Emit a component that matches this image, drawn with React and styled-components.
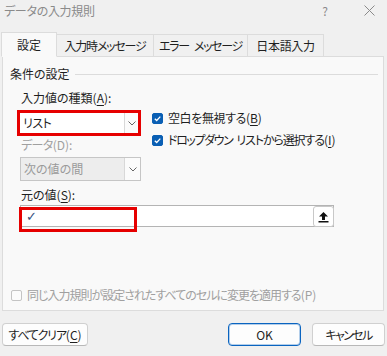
import styled, { createGlobalStyle } from "styled-components";

const GlobalStyle = createGlobalStyle`
  html, body {
    margin: 0;
    padding: 0;
    background: #f0f0f0;
  }
  body {
    font-family: "Noto Sans CJK JP", "Noto Sans", sans-serif;
    font-size: 12px;
    color: #1f1f1f;
    font-feature-settings: "palt";
  }
`;

const Window = styled.div`
  width: 387px;
  height: 356px;
  display: flex;
  flex-direction: column;
  background: #f0f0f0;
  overflow: hidden;
`;

const TitleBar = styled.div`
  height: 21px;
  display: flex;
  align-items: center;
  padding: 0 8px 0 4px;
  color: #8a8a8a;
  font-size: 12px;
  line-height: 14px;
`;

const TitleText = styled.span`
  flex: 1;
  letter-spacing: -0.3px;
`;

const TitleButton = styled.span`
  width: 20px;
  display: flex;
  justify-content: center;
  margin-left: ${(p) => p.$gap || 0}px;
  color: #8a8a8a;
`;

// kana-heavy strings run narrower in the original UI font
const Tight = styled.span`
  letter-spacing: ${(p) => p.$ls ?? -1}px;
`;

const Gap = styled.span`
  display: inline-block;
  width: ${(p) => p.$w}px;
`;

const TabRow = styled.div`
  display: flex;
  align-items: flex-end;
  margin-top: 11px;
  padding-left: 1px;
  height: 25px;
  margin-bottom: -1px;
  position: relative;
  z-index: 1;
`;

const Tab = styled.div`
  width: ${(p) => p.$w}px;
  height: ${(p) => (p.$active ? 25 : 23)}px;
  box-sizing: border-box;
  display: flex;
  align-items: center;
  justify-content: center;
  white-space: nowrap;
  border: 1px solid #dcdcdc;
  border-left-width: ${(p) => (p.$first ? 1 : 0)}px;
  border-bottom-color: ${(p) => (p.$active ? "#f9f9f9" : "#dcdcdc")};
  background: ${(p) => (p.$active ? "#f9f9f9" : "#f0f0f0")};
  line-height: 14px;
  padding-top: ${(p) => (p.$active ? 0 : 1)}px;
`;

const Panel = styled.div`
  margin-left: 2px;
  width: 382px;
  height: 255px;
  box-sizing: border-box;
  border: 1px solid #dcdcdc;
  background: #f9f9f9;
  display: flex;
  flex-direction: column;
`;

const GroupHeader = styled.div`
  display: flex;
  align-items: center;
  margin: 10px 5px 0 7px;
  line-height: 14px;
`;

const GroupLine = styled.div`
  flex: 1;
  height: 1px;
  background: #dcdcdc;
  margin-left: 5px;
`;

const Content = styled.div`
  padding-left: 14px;
  display: flex;
  flex-direction: column;
`;

const FieldLabel = styled.div`
  margin-left: 4px;
  margin-top: ${(p) => p.$mt || 0}px;
  line-height: 14px;
  color: ${(p) => (p.$disabled ? "#a0a0a0" : "#1f1f1f")};
`;

const Under = styled.span`
  text-decoration: underline;
  text-underline-offset: 2px;
`;

const Row = styled.div`
  display: flex;
  align-items: flex-start;
  margin-top: 5px;
`;

const LeftCol = styled.div`
  width: 124px;
  display: flex;
  flex-direction: column;
`;

const Highlight = styled.div`
  border: 3px solid #e60000;
  height: 26px;
  box-sizing: border-box;
  display: flex;
`;

const Combo = styled.div`
  display: flex;
  box-sizing: border-box;
  height: ${(p) => p.$h}px;
  width: ${(p) => p.$w}px;
  margin-left: ${(p) => p.$ml || 0}px;
  margin-top: ${(p) => p.$mt || 0}px;
  background: ${(p) => (p.$disabled ? "#ededed" : "#ffffff")};
  border: ${(p) => (p.$disabled ? "1px solid #c6c6c6" : "none")};
  color: ${(p) => (p.$disabled ? "#9a9a9a" : "#1f1f1f")};
  line-height: 14px;
`;

const ComboText = styled.div`
  flex: 1;
  display: flex;
  align-items: center;
  padding-left: 3px;
`;

const ComboArrow = styled.div`
  width: ${(p) => p.$w}px;
  display: flex;
  align-items: center;
  justify-content: center;
  border-left: 1px solid #d8d8d8;
  background: #fbfbfb;
`;

const RightCol = styled.div`
  margin-left: 11px;
  display: flex;
  flex-direction: column;
  gap: 8px;
  margin-top: 1px;
`;

const CheckRow = styled.label`
  display: flex;
  align-items: center;
  line-height: 14px;
  white-space: nowrap;
  color: ${(p) => (p.$disabled ? "#a0a0a0" : "#1f1f1f")};
`;

const Box = styled.span`
  width: 11px;
  height: 11px;
  box-sizing: border-box;
  border-radius: 2px;
  margin-right: 5px;
  display: flex;
  align-items: center;
  justify-content: center;
  background: ${(p) => (p.$checked ? "#0a5fb4" : "#fbfbfb")};
  border: 1px solid ${(p) => (p.$checked ? "#0a5fb4" : "#c4c4c4")};
`;

const SourceWrap = styled.div`
  position: relative;
  margin-top: 3px;
  margin-left: 3px;
  width: 314px;
  height: 22px;
  box-sizing: border-box;
  border: 1px solid #b4b4b4;
  background: #fff;
  display: flex;
  align-items: center;
`;

const SourceText = styled.span`
  padding-left: 5px;
  padding-top: 1px;
  color: #34507e;
  flex: 1;
  line-height: 14px;
  font-family: "DejaVu Sans", sans-serif;
  font-size: 13px;
`;

const PickButton = styled.div`
  width: 21px;
  height: 21px;
  box-sizing: border-box;
  border: 1px solid #c8c8c8;
  border-radius: 3px;
  background: #fff;
  display: flex;
  align-items: center;
  justify-content: center;
  margin-right: -1px;
  margin-top: 1px;
`;

const Annotation = styled.div`
  position: absolute;
  left: -2px;
  top: 1px;
  width: 118px;
  height: 25px;
  box-sizing: border-box;
  border: 3px solid #e60000;
  pointer-events: none;
`;

const BottomCheck = styled.div`
  margin-top: auto;
  margin-bottom: 8px;
  padding-left: 8px;
`;

const Footer = styled.div`
  display: flex;
  align-items: center;
  margin-top: 12px;
  padding: 0 2px;
`;

const Button = styled.button`
  height: 23px;
  width: ${(p) => p.$w}px;
  margin-left: ${(p) => p.$ml || 0}px;
  box-sizing: border-box;
  border-radius: 4px;
  background: #fdfdfd;
  border: 1px solid ${(p) => (p.$primary ? "#0a64c0" : "#d0d0d0")};
  border-bottom-color: ${(p) => (p.$primary ? "#0a64c0" : "#b8b8b8")};
  box-shadow: ${(p) => (p.$primary ? "inset 0 0 0 1px rgba(10,100,192,0.3)" : "none")};
  font-family: inherit;
  font-feature-settings: "palt";
  font-size: 12px;
  line-height: 14px;
  color: #1f1f1f;
  padding: 0;
  display: flex;
  align-items: center;
  justify-content: center;
  white-space: nowrap;
`;

const Spacer = styled.div`
  flex: 1;
`;

const Chevron = () => (
  <svg width="8" height="5" viewBox="0 0 8 5">
    <path d="M0.5 0.5 L4 4 L7.5 0.5" fill="none" stroke="#666" strokeWidth="1" />
  </svg>
);

const Check = () => (
  <svg width="9" height="9" viewBox="0 0 9 9">
    <path d="M1.8 4.7 L3.7 6.5 L7.3 2.6" fill="none" stroke="#fff" strokeWidth="1.3" />
  </svg>
);

const UploadIcon = () => (
  <svg width="11" height="12" viewBox="0 0 11 12">
    <path d="M5.5 1 L1 5.5 L4 5.5 L4 9 L7 9 L7 5.5 L10 5.5 Z" fill="#111" />
    <rect x="0.5" y="10" width="10" height="1.5" fill="#111" />
  </svg>
);

const CloseIcon = () => (
  <svg width="11" height="11" viewBox="0 0 11 11">
    <path d="M0.5 0.5 L10.5 10.5 M10.5 0.5 L0.5 10.5" stroke="#8a8a8a" strokeWidth="1" />
  </svg>
);

const tabs = [
  { parts: ["設定"], w: 56, active: true, ls: 0 },
  { parts: ["入力時メッセージ"], w: 97, ls: -1.2 },
  { parts: ["エラー", "メッセージ"], w: 94, ls: -1.3 },
  { parts: ["日本語入力"], w: 76, ls: -0.3 },
];

export default function App() {
  return (
    <>
      <GlobalStyle />
      <Window>
        <TitleBar>
          <TitleText>データの入力規則</TitleText>
          <TitleButton>?</TitleButton>
          <TitleButton $gap={24}>
            <CloseIcon />
          </TitleButton>
        </TitleBar>

        <TabRow>
          {tabs.map((t, i) => (
            <Tab key={t.parts.join(" ")} $w={t.w} $active={t.active} $first={i === 0}>
              {t.parts.map((part, j) => (
                <span key={part}>
                  {j > 0 && <Gap $w={5} />}
                  <Tight $ls={t.ls}>{part}</Tight>
                </span>
              ))}
            </Tab>
          ))}
        </TabRow>

        <Panel>
          <GroupHeader>
            条件の設定
            <GroupLine />
          </GroupHeader>
          <Content>
            <FieldLabel $mt={10}>
              入力値の種類(<Under>A</Under>):
            </FieldLabel>
            <Row>
              <LeftCol>
                <Highlight>
                  <Combo $h={20} $w={118}>
                    <ComboText>
                      <Tight $ls={-0.5}>リスト</Tight>
                    </ComboText>
                    <ComboArrow $w={13}>
                      <Chevron />
                    </ComboArrow>
                  </Combo>
                </Highlight>
                <FieldLabel $mt={2} $disabled>
                  <Tight $ls={-0.6}>データ</Tight>(D):
                </FieldLabel>
                <Combo $h={24} $w={121} $ml={3} $mt={5} $disabled>
                  <ComboText>次の値の間</ComboText>
                  <ComboArrow $w={15}>
                    <Chevron />
                  </ComboArrow>
                </Combo>
              </LeftCol>
              <RightCol>
                <CheckRow>
                  <Box $checked>
                    <Check />
                  </Box>
                  <Tight $ls={-0.4}>空白を無視する</Tight>(<Under>B</Under>)
                </CheckRow>
                <CheckRow>
                  <Box $checked>
                    <Check />
                  </Box>
                  <Tight $ls={-1.4}>ドロップダウン</Tight>
                  <Gap $w={4} />
                  <Tight $ls={-1.1}>リストから選択する</Tight>(<Under>I</Under>)
                </CheckRow>
              </RightCol>
            </Row>
            <FieldLabel $mt={7}>
              元の値(<Under>S</Under>):
            </FieldLabel>
            <SourceWrap>
              <SourceText>✓</SourceText>
              <PickButton>
                <UploadIcon />
              </PickButton>
              <Annotation />
            </SourceWrap>
          </Content>
          <BottomCheck>
            <CheckRow $disabled>
              <Box />
              <Tight $ls={-1}>同じ入力規則が設定されたすべてのセルに変更を適用する</Tight>(P)
            </CheckRow>
          </BottomCheck>
        </Panel>

        <Footer>
          <Button $w={86}>
            <Tight $ls={-1.2}>すべてクリア</Tight>(<Under>C</Under>)
          </Button>
          <Spacer />
          <Button $w={73} $primary>
            OK
          </Button>
          <Button $w={73} $ml={11}>
            <Tight $ls={-1.6}>キャンセル</Tight>
          </Button>
        </Footer>
      </Window>
    </>
  );
}
